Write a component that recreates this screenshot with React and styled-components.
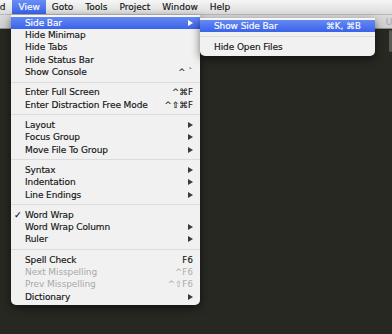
import React from "react";
import styled, { createGlobalStyle } from "styled-components";

const GlobalStyle = createGlobalStyle`
  html, body {
    margin: 0;
    padding: 0;
    background: #272822;
  }
  body {
    font-family: "DejaVu Sans", "Liberation Sans", sans-serif;
    font-size: 9px;
  }
`;

const Screen = styled.div`
  position: relative;
  width: 392px;
  height: 334px;
  overflow: hidden;
  display: flex;
  flex-direction: column;
  background: #272822;
`;

const MenuBar = styled.div`
  height: 15px;
  flex: none;
  display: flex;
  align-items: stretch;
  margin-left: -19px;
  background: linear-gradient(#f6f6f6, #e6e6e6 60%, #dadada);
  border-bottom: 1px solid #b9b9b9;
  box-sizing: border-box;
`;

const BarItem = styled.div`
  display: flex;
  align-items: center;
  padding: 0 ${(p) => (p.$first ? "7px" : "6px")} 0 6px;
  color: ${(p) => (p.$open ? "#fff" : "#141414")};
  background: ${(p) =>
    p.$open ? "linear-gradient(#6a8ef3, #3b64ea)" : "transparent"};
  -webkit-text-stroke: 0.15px currentColor;
  white-space: nowrap;
`;

const TitleStrip = styled.div`
  height: 13px;
  flex: none;
  display: flex;
  justify-content: flex-end;
  align-items: center;
  margin-right: -6px;
  background: linear-gradient(#dadada, #cdcdcd);
  border-bottom: 1px solid #8d8d8d;
  color: #a8a8a8;
  font-size: 9px;
`;

const Editor = styled.div`
  flex: 1;
  display: flex;
  justify-content: flex-end;
  background: #272822;
`;

const Scroll = styled.div`
  width: 3px;
  height: 22px;
  margin-top: 1px;
  background: #5a5a55;
  border-radius: 2px;
`;

const Menu = styled.div`
  position: absolute;
  top: 15px;
  left: 11px;
  width: 189px;
  padding: 2px 0 2px;
  box-sizing: border-box;
  background: rgba(246, 246, 246, 0.98);
  border-radius: 0 0 5px 5px;
  box-shadow: 0 3px 9px rgba(0, 0, 0, 0.55);
  color: #141414;
`;

const SubMenu = styled(Menu)`
  top: 1px;
  left: 100%;
  width: 175px;
  padding: 2px 0 3px;
`;

const Row = styled.div`
  position: relative;
  height: 12.2px;
  display: flex;
  align-items: center;
  padding: 0 ${(p) => (p.$wide ? "14px" : "7px")} 0 14px;
  color: ${(p) => (p.$active ? "#fff" : p.$disabled ? "#a9a9a9" : "#141414")};
  background: ${(p) =>
    p.$active ? "linear-gradient(#6589f2, #3a62ea)" : "transparent"};
  -webkit-text-stroke: ${(p) => (p.$disabled ? "0" : "0.15px currentColor")};
  white-space: nowrap;
`;

const Check = styled.span`
  width: 11px;
  margin-left: -11px;
`;

const Label = styled.span`
  flex: 1;
  letter-spacing: -0.1px;
`;

const Key = styled.span`
  font-size: 8.5px;
  letter-spacing: 0.2px;
`;

const Arrow = styled.span`
  width: 0;
  height: 0;
  border-top: 3px solid transparent;
  border-bottom: 3px solid transparent;
  border-left: 5px solid ${(p) => (p.$active ? "#fff" : "#3a3a3a")};
`;

const Sep = styled.div`
  height: 8.4px;
  display: flex;
  align-items: center;
  &::after {
    content: "";
    flex: 1;
    height: 1px;
    background: #dcdcdc;
  }
`;

const menuBar = ["Find", "View", "Goto", "Tools", "Project", "Window", "Help"];

const viewMenu = [
  [
    { label: "Side Bar", sub: true, active: true },
    { label: "Hide Minimap" },
    { label: "Hide Tabs" },
    { label: "Hide Status Bar" },
    { label: "Show Console", keys: "^ `" },
  ],
  [
    { label: "Enter Full Screen", keys: "^⌘F" },
    { label: "Enter Distraction Free Mode", keys: "^⇧⌘F" },
  ],
  [
    { label: "Layout", sub: true },
    { label: "Focus Group", sub: true },
    { label: "Move File To Group", sub: true },
  ],
  [
    { label: "Syntax", sub: true },
    { label: "Indentation", sub: true },
    { label: "Line Endings", sub: true },
  ],
  [
    { label: "Word Wrap", checked: true },
    { label: "Word Wrap Column", sub: true },
    { label: "Ruler", sub: true },
  ],
  [
    { label: "Spell Check", keys: "F6" },
    { label: "Next Misspelling", keys: "^F6", disabled: true },
    { label: "Prev Misspelling", keys: "^⇧F6", disabled: true },
    { label: "Dictionary", sub: true },
  ],
];

const sideBarMenu = [
  [{ label: "Show Side Bar", keys: "⌘K, ⌘B", active: true }],
  [{ label: "Hide Open Files" }],
];

function MenuRows({ groups, wide, children }) {
  return groups.map((group, gi) => (
    <React.Fragment key={gi}>
      {gi > 0 && <Sep />}
      {group.map((item) => (
        <Row
          key={item.label}
          $wide={wide}
          $active={item.active}
          $disabled={item.disabled}
        >
          {item.checked && <Check>✓</Check>}
          <Label>{item.label}</Label>
          {item.keys && <Key>{item.keys}</Key>}
          {item.sub && <Arrow $active={item.active} />}
          {item.sub && item.active && children}
        </Row>
      ))}
    </React.Fragment>
  ));
}

export default function App() {
  return (
    <>
      <GlobalStyle />
      <Screen>
        <MenuBar>
          {menuBar.map((name, i) => (
            <BarItem key={name} $first={i === 0} $open={name === "View"}>
              {name}
            </BarItem>
          ))}
        </MenuBar>
        <TitleStrip>Un</TitleStrip>
        <Editor>
          <Scroll />
        </Editor>
        <Menu>
          <MenuRows groups={viewMenu}>
            <SubMenu>
              <MenuRows groups={sideBarMenu} wide />
            </SubMenu>
          </MenuRows>
        </Menu>
      </Screen>
    </>
  );
}
